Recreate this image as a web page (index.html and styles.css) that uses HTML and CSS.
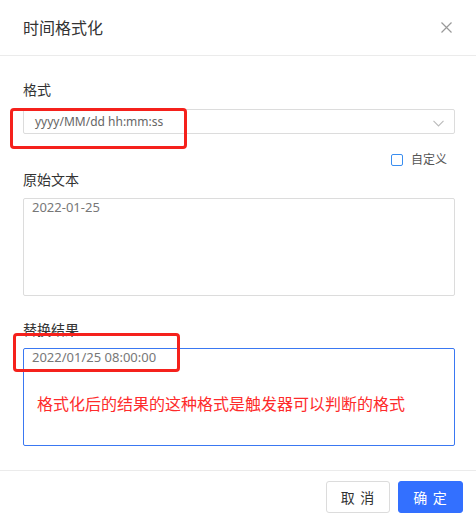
FILE: index.html
```html
<!DOCTYPE html>
<html lang="zh-CN">
<head>
    <meta charset="UTF-8">
    <meta name="viewport" content="width=device-width, initial-scale=1.0">
    <title>时间格式化</title>
    <link rel="stylesheet" href="styles.css">
</head>
<body>
    <div class="dialog">
        <div class="dialog-header">
            <span class="dialog-title">时间格式化</span>
            <svg class="close-icon" width="11" height="11" viewBox="0 0 11 11">
                <path d="M0.5 0.5 L10.5 10.5 M10.5 0.5 L0.5 10.5" stroke="#999" stroke-width="1.2" fill="none"/>
            </svg>
        </div>

        <div class="dialog-body">
            <div class="field-label">格式</div>
            <div class="select">
                <span class="select-text">yyyy/MM/dd hh:mm:ss</span>
                <svg class="chevron" width="11" height="7" viewBox="0 0 11 7">
                    <path d="M0.5 0.8 L5.5 6 L10.5 0.8" stroke="#bbb" stroke-width="1.1" fill="none"/>
                </svg>
            </div>

            <div class="check-row">
                <span class="checkbox"></span>
                <span class="check-text">自定义</span>
            </div>

            <div class="field-label">原始文本</div>
            <div class="textbox">2022-01-25</div>

            <div class="field-label spaced">替换结果</div>
            <div class="textbox active">2022/01/25 08:00:00</div>
        </div>

        <div class="dialog-footer">
            <button class="btn">取 消</button>
            <button class="btn primary">确 定</button>
        </div>
    </div>

    <!-- 标注 -->
    <div class="mark mark-format"></div>
    <div class="mark mark-result"></div>
    <div class="note">格式化后的结果的这种格式是触发器可以判断的格式</div>
</body>
</html>
```

FILE: styles.css
```css
* {
    margin: 0;
    padding: 0;
    box-sizing: border-box;
    font-family: "Noto Sans", "Noto Sans CJK SC", sans-serif;
}

body {
    position: relative;
    width: 476px;
    height: 521px;
    background-color: #fff;
    color: #333;
}

.dialog-header {
    height: 56px;
    padding: 0 24px 0 23px;
    display: flex;
    align-items: center;
    justify-content: space-between;
    border-bottom: 1px solid #ebebeb;
}

.dialog-title {
    font-size: 16px;
    color: #333;
    line-height: 20px;
}

.dialog-body {
    padding: 24px 21px 24px 23px;
}

.field-label {
    font-size: 14px;
    line-height: 20px;
    color: #333;
    margin-bottom: 9px;
}

.field-label.spaced {
    margin-top: 24px;
    margin-bottom: 8px;
}

.select {
    height: 25px;
    border: 1px solid #dcdcdc;
    border-radius: 2px;
    display: flex;
    align-items: center;
    justify-content: space-between;
    padding: 0 10px 0 11px;
}

.select-text {
    font-size: 12px;
    color: #666;
}

.chevron {
    margin-top: 3px;
}

.check-row {
    display: flex;
    justify-content: flex-end;
    align-items: center;
    gap: 8px;
    height: 36px;
    padding: 16px 8px 0 0;
}

.checkbox {
    width: 12px;
    height: 12px;
    border: 1px solid #3a8ef0;
    border-radius: 2px;
}

.check-text {
    font-size: 12px;
    line-height: 20px;
    color: #555;
}

.check-row + .field-label {
    margin-bottom: 8px;
}

.textbox {
    height: 98px;
    border: 1px solid #dcdcdc;
    border-radius: 2px;
    padding: 0 8px;
    font-size: 13px;
    line-height: 16px;
    color: #777;
}

.textbox.active {
    border-color: #3a78f2;
}

.dialog-footer {
    border-top: 1px solid #ebebeb;
    display: flex;
    justify-content: flex-end;
    gap: 8px;
    padding: 10px 13px 0 0;
}

.btn {
    width: 64px;
    height: 32px;
    border: 1px solid #dcdcdc;
    border-radius: 3px;
    background-color: #fff;
    font-size: 14px;
    color: #333;
    letter-spacing: 1px;
}

.btn.primary {
    width: 65px;
    background-color: #3370ff;
    border-color: #3370ff;
    color: #fff;
}

.mark {
    position: absolute;
    border: 3px solid #f5211c;
    border-radius: 4px;
}

.mark-format {
    left: 10px;
    top: 108px;
    width: 177px;
    height: 41px;
}

.mark-result {
    left: 13px;
    top: 333px;
    width: 167px;
    height: 39px;
}

.note {
    position: absolute;
    left: 37px;
    top: 394px;
    font-size: 16px;
    line-height: 20px;
    color: #fe2b2b;
}
```
